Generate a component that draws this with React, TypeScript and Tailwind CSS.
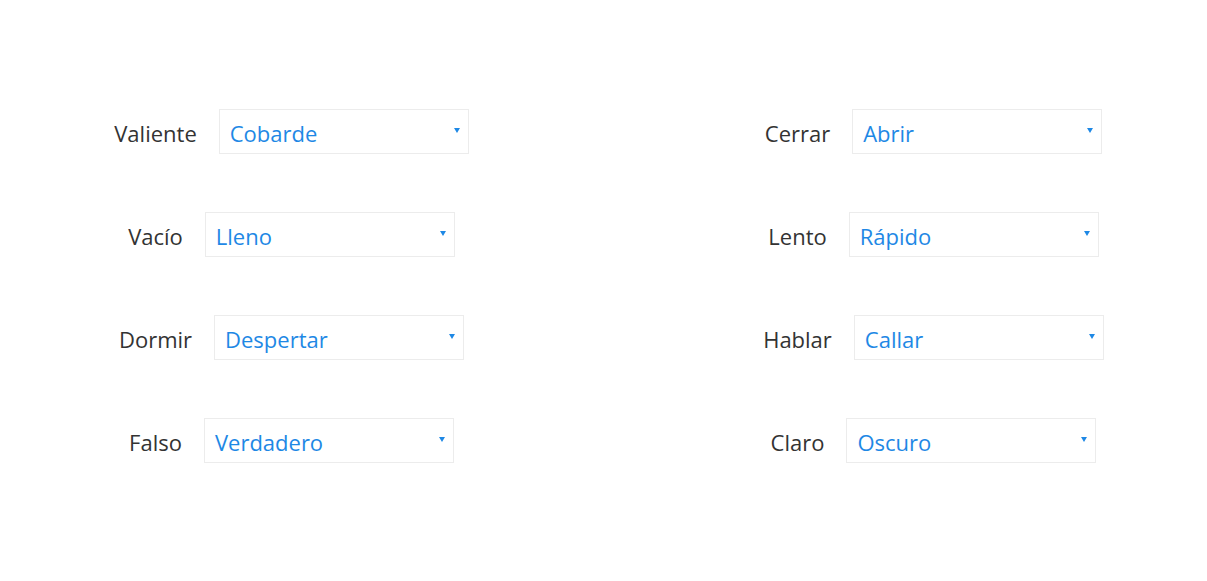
const left = [
    { label: 'Valiente', value: 'Cobarde' },
    { label: 'Vacío', value: 'Lleno' },
    { label: 'Dormir', value: 'Despertar' },
    { label: 'Falso', value: 'Verdadero' },
];

const right = [
    { label: 'Cerrar', value: 'Abrir' },
    { label: 'Lento', value: 'Rápido' },
    { label: 'Hablar', value: 'Callar' },
    { label: 'Claro', value: 'Oscuro' },
];

const Pair = (props: { label: string, value: string }) => {
    return (
        <div className="flex items-center justify-center h-[45px]">
            <span className="text-[#333333] mr-[22px] pt-[3px]">{props.label}</span>
            <div className="relative w-[250px] h-[45px] border border-[#ececec] bg-white flex items-center pl-[10px] pt-[3px]">
                <span className="text-[#1e88e5]">{props.value}</span>
                <span className="absolute right-[8px] top-[18px] w-0 h-0 border-l-[3px] border-r-[3px] border-t-[5px] border-l-transparent border-r-transparent border-t-[#1e88e5]" />
            </div>
        </div>
    )
};

export default function App() {
    return (
        <div className="w-[1207px] h-[581px] bg-white" style={{ fontFamily: '"Open Sans", "Noto Sans", sans-serif' }}>
            <div className="grid grid-cols-[500px_500px] gap-x-[142px] pl-[41.5px] pt-[109px] text-[22px]">
                <div className="flex flex-col gap-[58px]">
                    {left.map(p => <Pair key={p.label} {...p} />)}
                </div>
                <div className="flex flex-col gap-[58px]">
                    {right.map(p => <Pair key={p.label} {...p} />)}
                </div>
            </div>
        </div>
    )
}
